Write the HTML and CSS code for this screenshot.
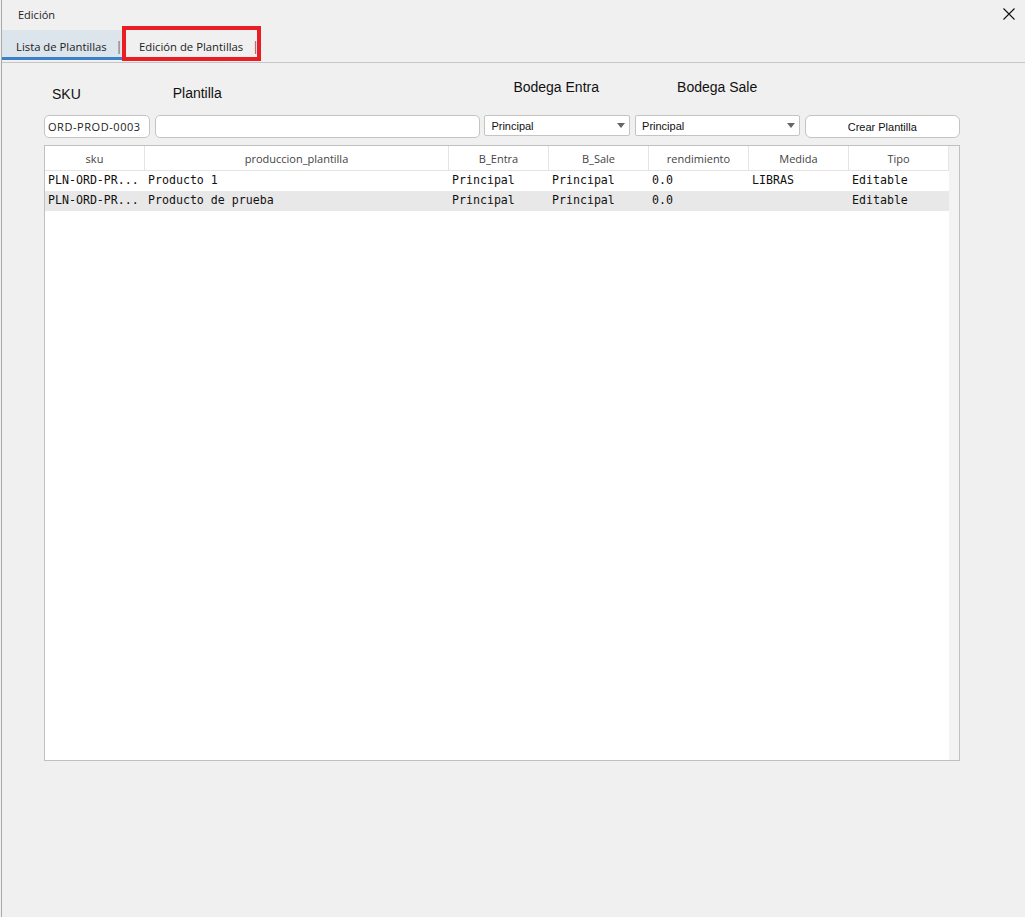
FILE: index.html
```html
<!DOCTYPE html>
<html lang="es">
<head>
<meta charset="utf-8">
<title>Edición</title>
<link rel="stylesheet" href="styles.css">
</head>
<body>
<div class="window">
  <div class="titlebar">
    <span class="title">Edición</span>
    <svg class="close" width="12" height="12" viewBox="0 0 12 12"><path d="M0.5 0.5 L11.5 11.5 M11.5 0.5 L0.5 11.5" stroke="#111" stroke-width="1.1" fill="none"/></svg>
  </div>
  <div class="tabs">
    <div class="tab active"><span>Lista de Plantillas</span><span class="sep">|</span></div>
    <div class="tab"><span>Edición de Plantillas</span><span class="sep">|</span></div>
    <div class="highlight"></div>
  </div>
  <div class="content">
    <div class="form">
      <div class="labels">
        <div class="lbl lbl-sku">SKU</div>
        <div class="lbl lbl-plantilla">Plantilla</div>
        <div class="lbl lbl-entra">Bodega Entra</div>
        <div class="lbl lbl-sale">Bodega Sale</div>
        <div></div>
      </div>
      <div class="fields">
        <div class="input sku"><span>ORD-PROD-0003</span></div>
        <div class="input"></div>
        <div class="combo"><span>Principal</span><span class="arrow"></span></div>
        <div class="combo"><span>Principal</span><span class="arrow"></span></div>
        <div class="button">Crear Plantilla</div>
      </div>
    </div>
    <div class="table">
      <div class="grid">
        <div class="row head">
          <div class="cell">sku</div>
          <div class="cell">produccion_plantilla</div>
          <div class="cell">B_Entra</div>
          <div class="cell">B_Sale</div>
          <div class="cell">rendimiento</div>
          <div class="cell">Medida</div>
          <div class="cell">Tipo</div>
        </div>
        <div class="row data">
          <div class="cell">PLN-ORD-PR...</div>
          <div class="cell">Producto 1</div>
          <div class="cell">Principal</div>
          <div class="cell">Principal</div>
          <div class="cell">0.0</div>
          <div class="cell">LIBRAS</div>
          <div class="cell">Editable</div>
        </div>
        <div class="row data alt">
          <div class="cell">PLN-ORD-PR...</div>
          <div class="cell">Producto de prueba</div>
          <div class="cell">Principal</div>
          <div class="cell">Principal</div>
          <div class="cell">0.0</div>
          <div class="cell"></div>
          <div class="cell">Editable</div>
        </div>
      </div>
      <div class="scrollbar"></div>
    </div>
  </div>
</div>
</body>
</html>
```
FILE: styles.css
```css
html, body {
  margin: 0;
  padding: 0;
  height: 100%;
}
body {
  background: #f0f0f0;
  overflow: hidden;
  font-family: "Open Sans", "Noto Sans", sans-serif;
  color: #222;
}
.window {
  height: 917px;
  box-sizing: border-box;
  border-left: 1px solid #a9a9a9;
  margin-left: 1px;
  display: flex;
  flex-direction: column;
}
.titlebar {
  height: 30px;
  display: flex;
  align-items: center;
  justify-content: space-between;
  padding: 0 10px 2px 16px;
  box-sizing: border-box;
}
.title {
  font-size: 11px;
  color: #222;
}
.close {
  display: block;
}
.tabs {
  position: relative;
  height: 33px;
  display: flex;
  border-bottom: 1px solid #c6c6c6;
  box-sizing: border-box;
}
.tab {
  display: flex;
  align-items: center;
  gap: 9px;
  font-size: 11.3px;
  color: #222;
  height: 30px;
  box-sizing: border-box;
  padding: 2px 0 0 14px;
}
.tab.active {
  width: 122px;
  background: #dce4ec;
  border-bottom: 3px solid #3b80c8;
  padding-top: 5px;
}
.tab:not(.active) {
  padding-left: 15px;
}
.sep {
  color: #7a3b45;
  font-size: 12px;
}
.highlight {
  position: absolute;
  left: 120px;
  top: -4px;
  width: 139px;
  height: 35px;
  box-sizing: border-box;
  border: 4px solid #ea1c24;
}
.content {
  padding: 0 0 0 42px;
}
.form {
  width: 916px;
}
.labels,
.fields {
  display: grid;
  grid-template-columns: 106px 325px 146px 165px 155px;
  column-gap: 4.7px;
}
.labels {
  height: 52px;
  font-family: "Liberation Sans", Arial, sans-serif;
  font-size: 14px;
  color: #111;
}
.lbl-sku { padding: 23px 0 0 8px; }
.lbl-plantilla { padding: 22px 0 0 18px; }
.lbl-entra { padding: 16px 0 0 29px; }
.lbl-sale { padding: 16px 0 0 42px; }
.fields {
  height: 23px;
  align-items: start;
}
.input {
  height: 23px;
  box-sizing: border-box;
  background: #fff;
  border: 1px solid #c4c4c4;
  border-radius: 5px;
  display: flex;
  align-items: center;
  overflow: hidden;
  white-space: nowrap;
  font-size: 11px;
  color: #222;
  padding: 0 4px 0 3px;
}
.sku span {
  letter-spacing: 0.55px;
}
.combo {
  height: 21px;
  box-sizing: border-box;
  background: #fff;
  border: 1px solid #c4c4c4;
  border-radius: 2px;
  display: flex;
  align-items: center;
  justify-content: space-between;
  padding: 0 4px 0 6px;
  font-family: "Liberation Sans", Arial, sans-serif;
  font-size: 11px;
  color: #111;
}
.arrow {
  width: 0;
  height: 0;
  border-left: 4.5px solid transparent;
  border-right: 4.5px solid transparent;
  border-top: 5px solid #666;
}
.button {
  height: 23px;
  box-sizing: border-box;
  background: #fff;
  border: 1px solid #c4c4c4;
  border-radius: 6px;
  display: flex;
  align-items: center;
  justify-content: center;
  font-family: "Liberation Sans", Arial, sans-serif;
  font-size: 11px;
  color: #111;
}
.table {
  margin-top: 7px;
  width: 916px;
  height: 616px;
  box-sizing: border-box;
  border: 1px solid #c0c0c0;
  background: #fff;
  display: flex;
}
.grid {
  width: 904px;
}
.scrollbar {
  width: 10px;
  background: #f3f3f3;
}
.row {
  display: grid;
  grid-template-columns: 100px 304px 100px 100px 100px 100px 100px;
}
.row.head {
  height: 25px;
  border-bottom: 1px solid #e4e4e4;
  box-sizing: border-box;
}
.head .cell {
  border-right: 1px solid #e4e4e4;
  display: flex;
  align-items: center;
  justify-content: center;
  font-size: 11px;
  color: #444;
  padding-top: 1px;
}
.row.data {
  height: 20px;
}
.row.alt {
  background: #e8e8e8;
}
.data .cell {
  font-family: "DejaVu Sans Mono", "Liberation Mono", monospace;
  font-size: 11.6px;
  color: #111;
  padding-left: 3px;
  padding-bottom: 2px;
  display: flex;
  align-items: center;
  white-space: nowrap;
  overflow: hidden;
}
```
